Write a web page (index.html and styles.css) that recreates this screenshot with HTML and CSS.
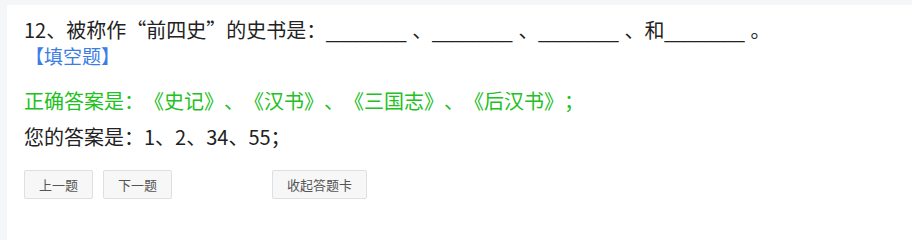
FILE: index.html
```html
<!DOCTYPE html>
<html lang="zh-CN">
<head>
<meta charset="utf-8">
<link rel="stylesheet" href="styles.css">
</head>
<body>
<div class="card">
  <div class="question">
    <div class="title">12、被称作“前四史”的史书是：<span class="blank">________</span>、<span class="blank">________</span>、<span class="blank">________</span>、和<span class="blank">________</span>。</div>
    <div class="type">【填空题】</div>
  </div>
  <div class="correct">正确答案是：《史记》、《汉书》、《三国志》、《后汉书》；</div>
  <div class="mine">您的答案是：1、2、34、55；</div>
  <div class="actions">
    <button class="btn">上一题</button>
    <button class="btn">下一题</button>
    <button class="btn btn-card">收起答题卡</button>
  </div>
</div>
</body>
</html>
```

FILE: styles.css
```css
html, body {
  margin: 0;
  padding: 0;
  background: #f5f6f8;
}
body {
  padding-top: 5px;
  padding-left: 7px;
  box-sizing: border-box;
  min-height: 100vh;
  display: flex;
  flex-direction: column;
  font-family: "Microsoft YaHei", "Noto Sans CJK SC", "Noto Sans", sans-serif;
  color: #222;
  text-spacing-trim: space-all;
}
.card {
  flex: 1;
  background: #fff;
  padding: 13px 17px 14px 17px;
}
.title {
  font-size: 20px;
  line-height: 24px;
}
.blank {
  font-family: "Liberation Sans", Arial, sans-serif;
  font-size: 18px;
  padding-right: 6px;
}
.type {
  font-size: 19px;
  line-height: 24px;
  color: #3b7de4;
  margin-left: 1px;
}
.correct {
  margin-top: 19px;
  font-size: 20px;
  line-height: 28px;
  color: #22c022;
}
.mine {
  margin-top: 8px;
  font-size: 20px;
  line-height: 28px;
  color: #222;
}
.actions {
  display: flex;
  margin-top: 19px;
  gap: 10px;
}
.btn {
  height: 29px;
  width: 69px;
  padding: 0;
  font-family: inherit;
  font-size: 13px;
  color: #555;
  background: #f7f7f7;
  border: 1px solid #dcdfe6;
  border-radius: 2px;
}
.btn-card {
  width: 95px;
  margin-left: 90px;
}
```
